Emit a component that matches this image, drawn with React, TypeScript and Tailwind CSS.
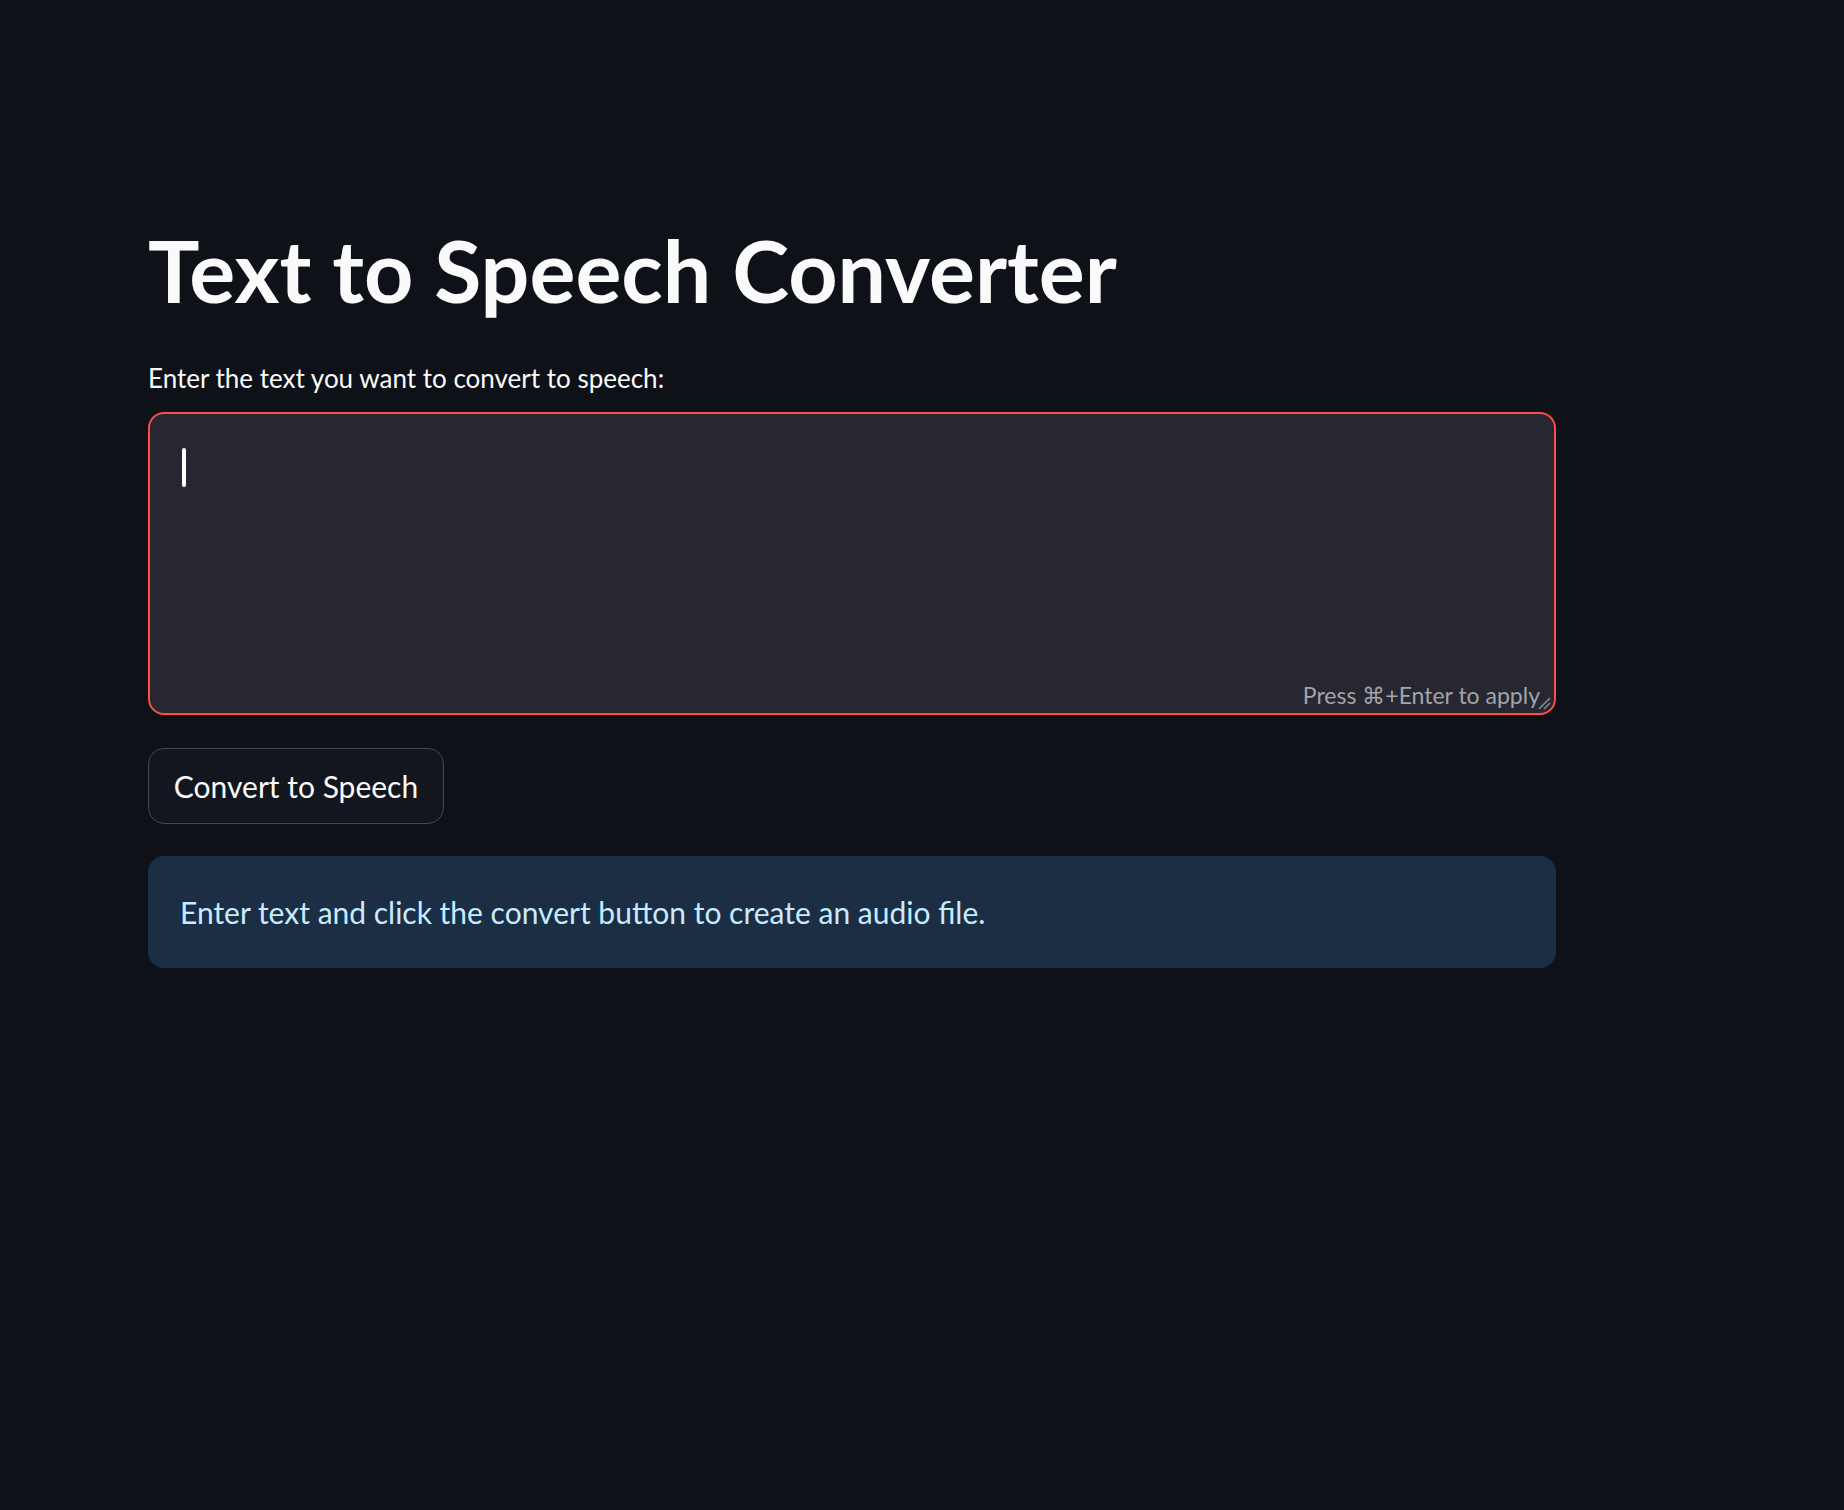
export default function App() {
  return (
    <div className="min-h-[1510px] w-full bg-[#0e1117] font-['Lato','Liberation_Sans',sans-serif] text-[#fafafa]">
      <div className="ml-[148px] flex w-[1408px] flex-col pt-[218px]">
        <h1 className="text-[86px] font-bold leading-[103px]">Text to Speech Converter</h1>

        <label className="mt-[41px] text-[26px] leading-[32px]">Enter the text you want to convert to speech:</label>

        <div className="relative mt-[18px] h-[303px] rounded-2xl border-2 border-[#ff4b4b] bg-[#262730] px-8 pt-[34px]">
          <span className="block h-[39px] w-[3.5px] rounded-sm bg-white" />
          <span className="absolute bottom-[4px] right-[14px] text-[23px] leading-[28px] text-[#a3a4ab]">
            Press ⌘+Enter to apply
          </span>
          <svg className="absolute bottom-[3px] right-[3px]" width="14" height="14" viewBox="0 0 14 14">
            <path d="M2 13 L13 2 M7 13 L13 7" stroke="#8b8c93" strokeWidth="1.5" />
          </svg>
        </div>

        <button className="mt-[33px] h-[76px] w-[296px] rounded-2xl border border-[#44464e] bg-[#13161e] text-[30px] text-[#fafafa]">
          Convert to Speech
        </button>

        <div className="mt-[32px] flex h-[112px] items-center rounded-2xl bg-[#1c2e44] px-8 text-[30px] text-[#c7ebff]">
          Enter text and click the convert button to create an audio file.
        </div>
      </div>
    </div>
  );
}
